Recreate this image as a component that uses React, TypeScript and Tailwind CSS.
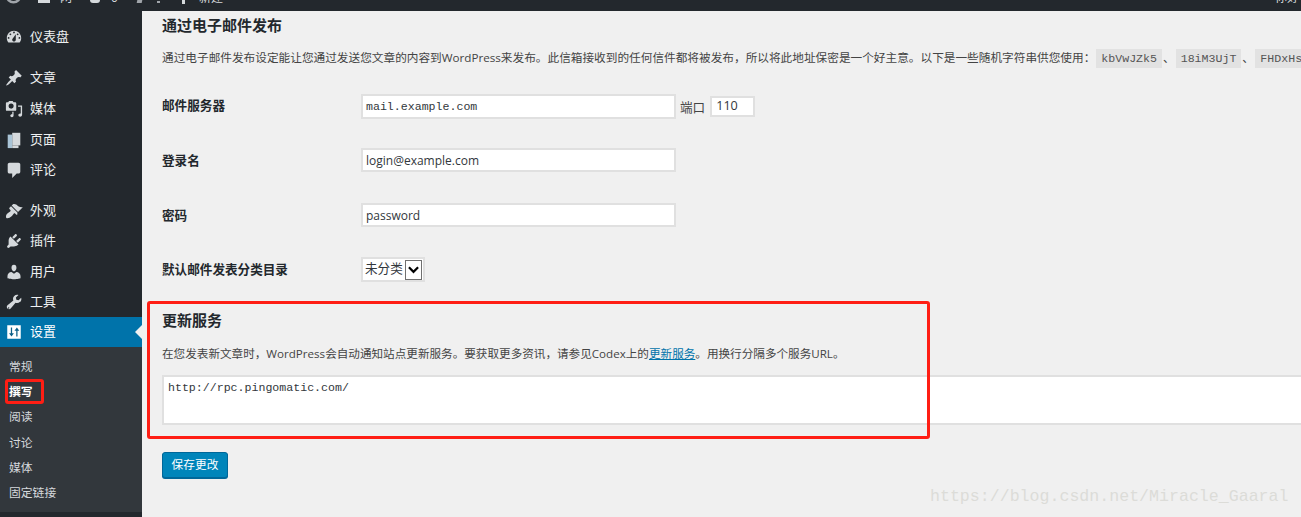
import React from "react";

const cjk = '"Open Sans", "Noto Sans CJK SC", sans-serif';
const iconSize = "h-[18px] w-[18px] shrink-0";

const Dash = () => (
  <svg viewBox="0 0 20 20" className={`${iconSize} fill-[#d5d9dc]`}>
    <path d="M3.76 16h12.48c1.1-1.37 1.76-3.11 1.76-5 0-4.42-3.58-8-8-8s-8 3.58-8 8c0 1.89.66 3.63 1.76 5zM10 4c.55 0 1 .45 1 1s-.45 1-1 1-1-.45-1-1 .45-1 1-1zM6 6c.55 0 1 .45 1 1s-.45 1-1 1-1-.45-1-1 .45-1 1-1zm8 0c.55 0 1 .45 1 1s-.45 1-1 1-1-.45-1-1 .45-1 1-1zm-5.37 5.55L12 7v6c0 1.1-.9 2-2 2s-2-.9-2-2c0-.57.24-1.08.63-1.45zM4 10c.55 0 1 .45 1 1s-.45 1-1 1-1-.45-1-1 .45-1 1-1zm12 0c.55 0 1 .45 1 1s-.45 1-1 1-1-.45-1-1 .45-1 1-1z" fillRule="evenodd" />
  </svg>
);
const Pin = () => (
  <svg viewBox="0 0 20 20" className={`${iconSize} fill-[#d5d9dc]`}>
    <path d="M10.44 3.02l1.82-1.82 6.36 6.35-1.83 1.82c-1.05-.68-2.48-.57-3.41.36l-.75.75c-.92.93-1.04 2.35-.35 3.41l-1.83 1.82-2.41-2.41-2.8 2.79c-.42.42-3.38 2.71-3.8 2.29s1.86-3.39 2.28-3.81l2.79-2.79L4.1 9.36l1.83-1.82c1.05.69 2.48.57 3.4-.36l.75-.75c.93-.92 1.05-2.35.36-3.41z" />
  </svg>
);
const Media = () => (
  <svg viewBox="0 0 20 20" className={`${iconSize} fill-[#d5d9dc]`}>
    <path fillRule="evenodd" d="M12.500 11V3.500c0-.55-.45-1-1-1H9.500L8.500 1h-4l-1 1.500H2c-.55 0-1 .45-1 1V11c0 .55.45 1 1 1h9.500c.55 0 1-.45 1-1zM6.800 4a2.800 2.800 0 1 1 0 5.600 2.800 2.800 0 0 1 0-5.600z" />
    <path d="M19 6v10.500c0 1.200-1 2.200-2.200 2.200-1.100 0-2-.8-2-1.900s.9-1.900 2-1.900c.2 0 .5 0 .7.100V7.500H14.500V6zM9.500 13v4.500c0 .9-.8 1.600-1.800 1.600S5.900 18.400 5.900 17.500s.8-1.600 1.800-1.600h.4V13z" />
  </svg>
);
const Pages = () => (
  <svg viewBox="0 0 20 20" className={iconSize}>
    <path className="fill-[#d5d9dc]" d="M8 2h9v14H8z" />
    <path className="fill-[#a9c4d6]" d="M3 4h5v15H3z" />
    <path className="fill-[#d5d9dc]" d="M8 16h7v3H8z" />
  </svg>
);
const Comment = () => (
  <svg viewBox="0 0 20 20" className={`${iconSize} fill-[#d5d9dc]`}>
    <path d="M5 2h10c1.100 0 2 .9 2 2v8c0 1.100-.9 2-2 2h-2l-5 5v-5H5c-1.100 0-2-.9-2-2V4c0-1.100.9-2 2-2z" />
  </svg>
);
const Brush = () => (
  <svg viewBox="0 0 20 20" className={`${iconSize} fill-[#d5d9dc]`}>
    <path d="M14.480 11.060L7.410 3.990l1.500-1.500c.5-.560 2.300-.470 3.510.320 1.210.800 1.430 1.280 2.910 2.100 1.180.64 2.450 1.260 4.450.850zm-.710.710L6.700 4.700 4.930 6.470c-.39.390-.39 1.020 0 1.410l1.060 1.060c.39.390.39 1.030 0 1.420-.6.600-1.430 1.110-2.210 1.690-.35.260-.7.530-1.010.84C1.430 13.730.5 16.700 1.500 17.700s3.970.07 5.810-1.770c.31-.31.580-.66.840-1.010.58-.78 1.090-1.610 1.690-2.210.39-.39 1.020-.39 1.410 0l1.060 1.060c.39.390 1.030.39 1.420 0z" />
  </svg>
);
const Plug = () => (
  <svg viewBox="0 0 20 20" className={`${iconSize} fill-[#d5d9dc]`}>
    <path d="M13.110 4.360L9.870 7.600 8 5.730l3.240-3.240c.35-.34 1.050-.2 1.560.32.520.51.660 1.210.31 1.550zm-8 1.770l.91-1.120 9.010 9.010-1.190.84c-.71.710-2.630 1.160-3.820 1.160H6.140L4.900 17.260c-.59.590-1.540.59-2.120 0-.59-.58-.59-1.530 0-2.120l1.240-1.240v-3.880c0-1.130.4-3.190 1.090-3.890zm7.260 3.970l3.240-3.240c.34-.35 1.040-.21 1.550.31.520.51.660 1.210.31 1.550l-3.240 3.250z" />
  </svg>
);
const User = () => (
  <svg viewBox="0 0 20 20" className={`${iconSize} fill-[#d5d9dc]`}>
    <path d="M10 9.250c-2.270 0-2.730-3.440-2.730-3.440C7 4.020 7.820 2 9.970 2c2.160 0 2.980 2.020 2.710 3.810 0 0-.41 3.440-2.680 3.440zm0 2.570L12.720 10c2.390 0 4.520 2.330 4.520 4.530v2.490s-3.650 1.130-7.240 1.130c-3.650 0-7.240-1.130-7.240-1.130v-2.490c0-2.250 1.940-4.480 4.470-4.480z" />
  </svg>
);
const Wrench = () => (
  <svg viewBox="0 0 20 20" className={`${iconSize} fill-[#d5d9dc]`}>
    <path d="M16.680 9.770c-1.340 1.340-3.300 1.670-4.950.99l-5.410 6.520c-.99.990-2.590.99-3.580 0s-.99-2.590 0-3.570l6.520-5.420c-.68-1.650-.35-3.610.99-4.950 1.280-1.280 3.120-1.640 4.720-1.090l-2.870 2.880.52 2.470 2.470.52 2.880-2.870c.55 1.600.19 3.440-1.090 4.720zm-12.620 6.120a.75.750 0 1 0 .75.750.75.75 0 0 0-.75-.75z" />
  </svg>
);
const Sliders = () => (
  <svg viewBox="0 0 20 20" className={iconSize}>
    <path className="fill-white" d="M2.500 2.500h15v15h-15z" />
    <path className="fill-[#0b5f88]" d="M6.500 5h1.400v6.500h2l-2.700 3.500-2.700-3.500h2zM12.500 15h1.400V8.500h2L13.200 5l-2.700 3.500h2z" />
  </svg>
);

const mainMenu: [React.ReactNode, string, string][] = [
  [<Pin />, "文章", "h-[31px]"],
  [<Media />, "媒体", "h-[31px]"],
  [<Pages />, "页面", "h-[31px]"],
  [<Comment />, "评论", "h-[30px]"],
];
const toolMenu: [React.ReactNode, string, string][] = [
  [<Brush />, "外观", "h-[31px]"],
  [<Plug />, "插件", "h-[30px]"],
  [<User />, "用户", "h-[31px]"],
  [<Wrench />, "工具", "h-[30px]"],
];
const subMenu = ["常规", "撰写", "阅读", "讨论", "媒体", "固定链接"];

const MenuRow = ({ icon, label, h }: { icon: React.ReactNode; label: string; h: string }) => (
  <div className={`flex items-center gap-[7px] pl-[5px] text-[13px] text-[#eef0f1] ${h}`}>
    {icon}
    <span>{label}</span>
  </div>
);

const fieldBox = "border-2 border-[#e0e0e0] bg-white text-[#32373c]";
const chip = "bg-[#e2e2e2] px-[5px] font-['Liberation_Mono'] text-[11.6px] leading-[19px] text-[#555]";
const label = "mt-[2px] w-[199px] text-[12.6px] font-semibold text-[#23282d]";

export default function App() {
  return (
    <div
      className="flex h-[517px] w-[1301px] flex-col overflow-hidden bg-[#f0f0f0] text-[11.7px] text-[#444]"
      style={{ fontFamily: cjk }}
    >
      {/* top bar, cut off by the screenshot: only the bottoms of its items show */}
      <div className="h-[11px] shrink-0 overflow-hidden bg-[#23282d]">
        <div className="flex h-[4px] items-end text-[12px] leading-[13px] text-[#d5d9dc]">
          <svg viewBox="0 0 20 20" className="ml-[5px] h-[17px] w-[17px] shrink-0 fill-none stroke-[#a0a5aa] stroke-[3]">
            <circle cx="10" cy="10" r="8" />
          </svg>
          <span className="ml-[16px] mb-[1px] h-[3px] w-[12px] shrink-0 bg-[#d5d9dc]" />
          <span className="ml-[10px]">网</span>
          <span className="ml-[18px] mb-[1px] h-[3px] w-[10px] shrink-0 rounded-b-full bg-[#d5d9dc]" />
          <span className="ml-[11px]">0</span>
          <span className="ml-[19px] mb-[1px] h-[3px] w-[5px] shrink-0 -skew-x-12 bg-[#a0a5aa]" />
          <span className="ml-[15px] mb-[1px] h-[2px] w-[3px] shrink-0 bg-[#a0a5aa]" />
          <span className="ml-[22px] h-[4px] w-[3px] shrink-0 bg-[#d5d9dc]" />
          <span className="ml-[14px]">新建</span>
          <span className="ml-auto mr-[2px]">你好</span>
        </div>
      </div>

      <div className="flex min-h-0 flex-1">
        {/* side menu */}
        <aside className="flex w-[142px] shrink-0 flex-col bg-[#23282d]">
          <div className="mt-[10px] mb-[10px]">
            <MenuRow icon={<Dash />} label="仪表盘" h="h-[31px]" />
          </div>
          <div className="mb-[10px]">
            {mainMenu.map(([icon, text, h]) => (
              <MenuRow key={text} icon={icon} label={text} h={h} />
            ))}
          </div>
          <div>
            {toolMenu.map(([icon, text, h]) => (
              <MenuRow key={text} icon={icon} label={text} h={h} />
            ))}
          </div>
          <div className="relative flex h-[30px] items-center gap-[7px] bg-[#0073aa] pl-[5px] text-[13px] text-white">
            <Sliders />
            <span>设置</span>
            <span className="absolute right-0 top-[8px] border-y-[7px] border-r-[7px] border-y-transparent border-r-[#f0f0f0]" />
          </div>
          <nav className="flex h-[165px] flex-col bg-[#32373c] pl-[9px] pt-[7px] text-[11.8px] text-[#d6d9dc]">
            {subMenu.map((item) => (
              <div
                key={item}
                className={`flex h-[25.3px] shrink-0 items-center ${item === "撰写" ? "relative font-semibold text-white" : ""}`}
              >
                {item}
                {item === "撰写" && (
                  <span className="absolute left-[-4px] top-0 h-[25px] w-[39px] rounded-[3px] border-[3px] border-[#ff1e14]" />
                )}
              </div>
            ))}
          </nav>
        </aside>

        {/* settings form */}
        <main className="relative min-w-0 flex-1 overflow-hidden pl-[20px]">
          <h2 className="mt-[4px] h-[20px] text-[15px] font-semibold leading-[20px] text-[#23282d]">通过电子邮件发布</h2>
          <p className="mt-[12px] flex h-[22px] items-center whitespace-nowrap text-[11.66px]">
            通过电子邮件发布设定能让您通过发送您文章的内容到WordPress来发布。此信箱接收到的任何信件都将被发布，所以将此地址保密是一个好主意。以下是一些随机字符串供您使用：
            <code className={`ml-[1px] ${chip}`}>kbVwJZk5</code>
            <span className="mx-[1px] w-[11.7px] shrink-0">、</span>
            <code className={chip}>18iM3UjT</code>
            <span className="mx-[1px] w-[12px] shrink-0">、</span>
            <code className={chip}>FHDxHsJ</code>
          </p>

          <div className="mt-[24px] flex h-[26px] items-center">
            <label className="w-[199px] text-[12.6px] font-semibold text-[#23282d]">邮件服务器</label>
            <div className={`flex h-[25px] w-[315px] items-center px-[3px] pt-[2px] font-['Liberation_Mono'] text-[11.6px] ${fieldBox}`}>mail.example.com</div>
            <span className="ml-[4px] mt-[5px] text-[12.6px]">端口</span>
            <div className={`ml-[5px] flex h-[21px] w-[45px] items-center px-[4px] text-[12.6px] ${fieldBox}`}>110</div>
          </div>
          <div className="mt-[29px] flex h-[24px] items-center">
            <label className={label}>登录名</label>
            <div className={`flex h-[24px] w-[315px] items-center px-[3px] pt-[2px] text-[12px] ${fieldBox}`}>login@example.com</div>
          </div>
          <div className="mt-[31px] flex h-[24px] items-center">
            <label className={label}>密码</label>
            <div className={`flex h-[24px] w-[315px] items-center px-[3px] pt-[2px] text-[12px] ${fieldBox}`}>password</div>
          </div>
          <div className="mt-[30px] flex h-[25px] items-center">
            <label className={label}>默认邮件发表分类目录</label>
            <div className={`flex h-[25px] w-[64px] items-center justify-between pl-[2px] pr-[1px] text-[12.6px] ${fieldBox}`}>
              未分类
              <span className="flex h-[20px] w-[17px] shrink-0 items-center justify-center border border-[#707070] bg-white">
                <svg viewBox="0 0 12 8" className="h-[8px] w-[11px] fill-none stroke-black stroke-[2.4]">
                  <path d="M1 1l5 5 5-5" />
                </svg>
              </span>
            </div>
          </div>

          {/* update services, framed in red */}
          <h2 className="mt-[28px] h-[20px] text-[15px] font-semibold leading-[20px] text-[#23282d]">更新服务</h2>
          <p className="mt-[14px] flex h-[20px] items-center whitespace-nowrap text-[11.6px]">
            在您发表新文章时，WordPress会自动通知站点更新服务。要获取更多资讯，请参见Codex上的
            <a className="text-[#0073aa] underline">更新服务</a>
            。用换行分隔多个服务URL。
          </p>
          <div className="mt-[11px] h-[50px] border-2 border-r-0 border-[#e0e0e0] bg-white px-[4px] py-[2px] font-['Liberation_Mono'] text-[11.6px] leading-[18px] text-[#32373c]">
            http://rpc.pingomatic.com/
          </div>
          <button className="mt-[27px] flex h-[26px] w-[66px] items-center justify-center rounded-[3px] border border-[#006799] bg-[#0085ba] text-[11.7px] text-white shadow-[0_1px_0_#006799]">
            保存更改
          </button>

          <div className="absolute left-[5px] top-[290px] h-[138px] w-[783px] rounded-[3px] border-[3px] border-[#ff1e14]" />
          <span className="absolute left-[788px] top-[474px] font-['Liberation_Mono'] text-[16.6px] leading-[24px] text-[#dcdcd8]">
            https://blog.csdn.net/Miracle_Gaaral
          </span>
        </main>
      </div>
    </div>
  );
}
